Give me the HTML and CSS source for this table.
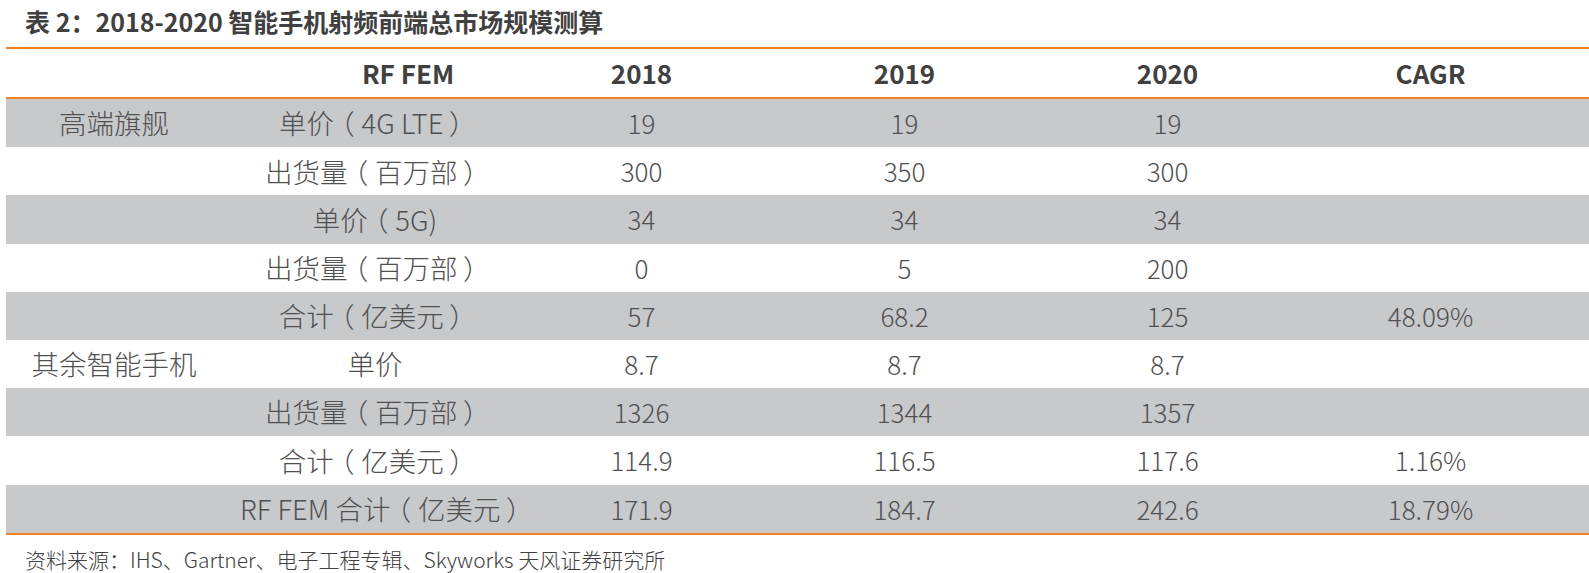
FILE: index.html
```
<!DOCTYPE html>
<html lang="zh">
<head>
<meta charset="utf-8">
<title>表 2</title>
<link rel="stylesheet" href="styles.css">
</head>
<body>
<div class="page">
  <div class="title">表 2：2018-2020 智能手机射频前端总市场规模测算</div>
  <div class="table">
    <div class="row head">
      <div class="c c1"></div>
      <div class="c c2 h2">RF FEM</div>
      <div class="c">2018</div>
      <div class="c">2019</div>
      <div class="c">2020</div>
      <div class="c">CAGR</div>
    </div>
    <div class="row gray">
      <div class="c c1">高端旗舰</div>
      <div class="c c2">单价<span class="lp">（</span>4G LTE<span class="rp">）</span></div>
      <div class="c">19</div><div class="c">19</div><div class="c">19</div><div class="c"></div>
    </div>
    <div class="row">
      <div class="c c1"></div>
      <div class="c c2">出货量<span class="lp">（</span>百万部<span class="rp">）</span></div>
      <div class="c">300</div><div class="c">350</div><div class="c">300</div><div class="c"></div>
    </div>
    <div class="row gray">
      <div class="c c1"></div>
      <div class="c c2">单价<span class="lp">（</span>5G)</div>
      <div class="c">34</div><div class="c">34</div><div class="c">34</div><div class="c"></div>
    </div>
    <div class="row">
      <div class="c c1"></div>
      <div class="c c2">出货量<span class="lp">（</span>百万部<span class="rp">）</span></div>
      <div class="c">0</div><div class="c">5</div><div class="c">200</div><div class="c"></div>
    </div>
    <div class="row gray">
      <div class="c c1"></div>
      <div class="c c2">合计<span class="lp">（</span>亿美元<span class="rp">）</span></div>
      <div class="c">57</div><div class="c">68.2</div><div class="c">125</div><div class="c">48.09%</div>
    </div>
    <div class="row">
      <div class="c c1">其余智能手机</div>
      <div class="c c2">单价</div>
      <div class="c">8.7</div><div class="c">8.7</div><div class="c">8.7</div><div class="c"></div>
    </div>
    <div class="row gray">
      <div class="c c1"></div>
      <div class="c c2">出货量<span class="lp">（</span>百万部<span class="rp">）</span></div>
      <div class="c">1326</div><div class="c">1344</div><div class="c">1357</div><div class="c"></div>
    </div>
    <div class="row">
      <div class="c c1"></div>
      <div class="c c2">合计<span class="lp">（</span>亿美元<span class="rp">）</span></div>
      <div class="c">114.9</div><div class="c">116.5</div><div class="c">117.6</div><div class="c">1.16%</div>
    </div>
    <div class="row gray">
      <div class="c c1"></div>
      <div class="c c2 total">RF FEM 合计<span class="lp">（</span>亿美元<span class="rp">）</span></div>
      <div class="c">171.9</div><div class="c">184.7</div><div class="c">242.6</div><div class="c">18.79%</div>
    </div>
  </div>
  <div class="source">资料来源：IHS、Gartner、电子工程专辑、Skyworks 天风证券研究所</div>
</div>
</body>
</html>
```
FILE: styles.css
```
html, body {
  margin: 0;
  padding: 0;
  background: #ffffff;
}
body {
  font-family: "Noto Sans CJK SC", "Noto Sans", sans-serif;
  color: #505050;
  width: 1589px;
  height: 573px;
  overflow: hidden;
}
.page {
  padding-left: 6px;
}
.title {
  height: 47px;
  line-height: 42px;
  padding-left: 19px;
  font-size: 25px;
  font-weight: 700;
  color: #404040;
  white-space: nowrap;
}
.table {
  border-top: 2px solid #ee7f24;
  border-bottom: 2px solid #ee7f24;
}
.row {
  display: grid;
  grid-template-columns: 216px 288px repeat(4, 263px) 1fr;
  height: 48.2px;
  align-items: center;
  font-size: 26px;
  font-weight: 300;
}
.row.head {
  height: 48px;
  border-bottom: 2px solid #ee7f24;
  font-weight: 700;
  color: #404040;
}
.row.gray {
  background: #c8c9cb;
}
.c {
  text-align: center;
  white-space: nowrap;
  line-height: 1;
}
.c1 {
  font-size: 27.5px;
}
.c2 {
  font-size: 27.5px;
  padding-left: 18px;
}
.head .c2 {
  font-size: 26px;
}
.h2 {
  padding-left: 84px;
}
.lp {
  font-feature-settings: "halt" 1;
  padding-left: 0.25em;
  padding-right: 0.25em;
}
.rp {
  font-feature-settings: "halt" 1;
  padding-left: 0.2em;
  padding-right: 0.3em;
}
.source {
  padding-left: 19px;
  padding-top: 11px;
  font-size: 21px;
  font-weight: 300;
  line-height: 26px;
  color: #404040;
  white-space: nowrap;
}
```
